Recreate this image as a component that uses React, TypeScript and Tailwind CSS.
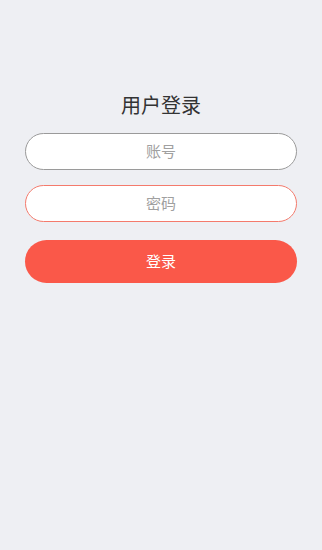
export default function App() {
  return (
    <div
      className="min-h-[550px] w-full bg-[#eeeff3] px-[25px] pt-[92px]"
      style={{ fontFamily: '"Noto Sans CJK SC", "Liberation Sans", sans-serif' }}
    >
      <h1 className="text-center text-[20px] leading-[26px] text-[#333]">用户登录</h1>
      <div className="mt-[15px] flex h-[37px] items-center justify-center rounded-full border border-[#9a9a9a] bg-white">
        <input
          placeholder="账号"
          className="w-full bg-transparent text-center text-[15px] text-[#333] outline-none placeholder:text-[#a0a0a0]"
        />
      </div>
      <div className="mt-[15px] flex h-[37px] items-center justify-center rounded-full border border-[#f47a6c] bg-white">
        <input
          autoFocus
          placeholder="密码"
          type="password"
          className="w-full bg-transparent text-center text-[15px] text-[#333] caret-[#777] outline-none placeholder:text-[#a0a0a0]"
        />
      </div>
      <button
        type="button"
        className="mt-[18px] flex h-[43px] w-full items-center justify-center rounded-full bg-[#fa5849] text-[15px] text-white"
      >
        登录
      </button>
    </div>
  )
}
